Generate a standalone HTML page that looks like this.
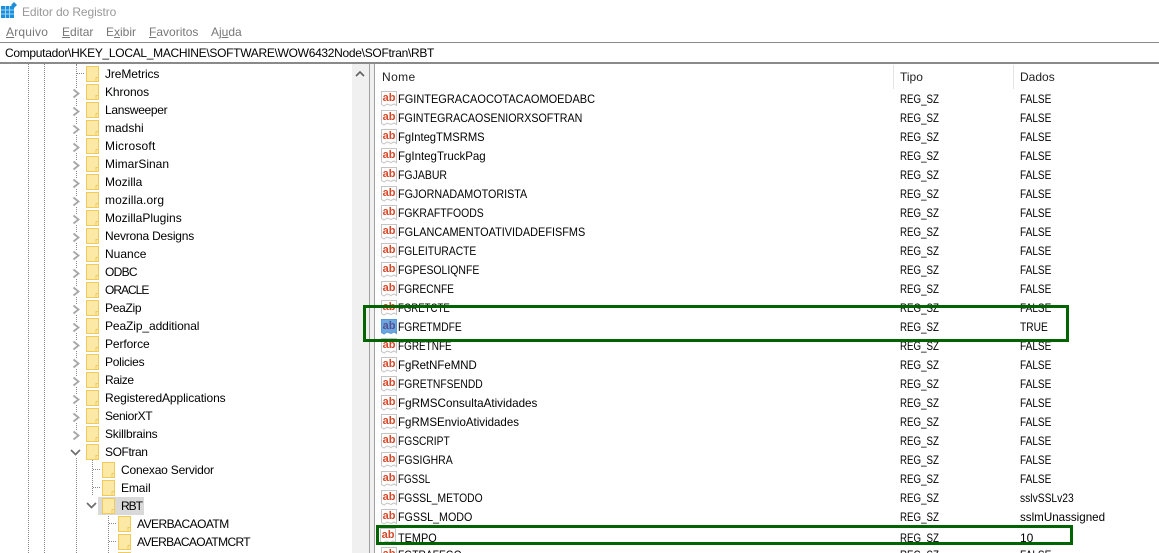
<!DOCTYPE html>
<html lang="pt"><head><meta charset="utf-8"><title>Editor do Registro</title>
<style>
html,body{margin:0;padding:0;background:#fff}
body{position:relative;width:1159px;height:553px;overflow:hidden;font:12px/18px "Liberation Sans",sans-serif;color:#000}
.a{position:absolute;white-space:nowrap}
.m{top:23px;color:#777;line-height:18px}
.m u{text-decoration:underline}
#tree{position:absolute;left:0;top:64px;width:352px;height:489px;overflow:hidden}
.t{position:relative;height:18px;line-height:18px;white-space:nowrap}
.t .f{position:absolute;top:2px;width:13px;height:16px}
.t .c{position:absolute;top:6px;width:9px;height:11px;background:#fff}
.t .l{position:absolute;top:1px;letter-spacing:-.1px}
.d0 .f{left:86px}.d0 .l{left:105px}.d0 .c{left:72px}
.d1 .f{left:102px}.d1 .l{left:121px}.d1 .c{left:88px}
.d2 .f{left:118px}.d2 .l{left:137px}
.dot{position:absolute;height:1px;border-top:1px dotted #888;top:9px}
.v{position:absolute;border-left:1px dotted #888}
#list{position:absolute;left:376px;top:89px;width:783px;height:464px;overflow:hidden}
.r{position:relative;height:19px;line-height:19px;white-space:nowrap}
.r svg{position:absolute;left:5px;top:1px;width:16px;height:17px}
.r b{font-weight:400;position:absolute;left:22px;top:1px;transform-origin:0 50%}
.r i{font-style:normal;position:absolute;left:524px;top:1px;transform:scaleX(.81);transform-origin:0 50%}
.r s{text-decoration:none;position:absolute;left:644px;top:1px;transform:scaleX(.84);transform-origin:0 50%}
.box{position:absolute;border:3px solid #006400;box-sizing:border-box}
</style></head><body>
<svg width="0" height="0" style="position:absolute">
<defs>
<symbol id="fo" viewBox="0 0 13 16"><path d="M.5.5H12.500V15.500H.5Z" fill="#fde9a6" stroke="#f0cb5c"/><path d="M10 11.500h2.500v4H10Z" fill="#fde9a6" stroke="#f0cb5c"/></symbol>
<symbol id="ch" viewBox="0 0 9 11"><path d="M1.500 1.500L6.500 5.500L1.500 9.500" fill="none" stroke="#a6a6a6" stroke-width="1.800"/></symbol>
<symbol id="cd" viewBox="0 0 11 9"><path d="M1 2L5.500 6.500L10 2" fill="none" stroke="#6e6e6e" stroke-width="1.700"/></symbol>
<symbol id="ab" viewBox="0 0 16 17"><path d="M.5 1.500H15.500V15.500L13 14 10 15.500 6 14 3 16 .5 14.500Z" fill="#fff" stroke="#c4c4c4"/><text x="8" y="11" text-anchor="middle" font-family="Liberation Sans,sans-serif" font-size="11" font-weight="700" fill="#d8492a">ab</text></symbol>
<symbol id="abs" viewBox="0 0 16 17"><path d="M.5 1.500H15.500V15.500L13 14 10 15.500 6 14 3 16 .5 14.500Z" fill="#6ca6e0" stroke="#5a97d8"/><text x="8" y="11" text-anchor="middle" font-family="Liberation Sans,sans-serif" font-size="11" font-weight="700" fill="#55508f">ab</text></symbol>
</defs>
</svg>

<!-- title bar -->
<svg class="a" style="left:1px;top:2px" width="16" height="16" viewBox="0 0 16 16">
<rect x="0" y="4" width="13" height="12" fill="#1a8fdc"/>
<path d="M4.500 4V16M8.500 4V16M0 8H13M0 12H13" stroke="#9fd4f3" stroke-width="1"/>
<path d="M13 0l3 3-3 3-3-3z" fill="#1e8fd8"/>
</svg>
<div class="a" style="left:22px;top:3px;color:#999;letter-spacing:-.1px">Editor do Registro</div>
<div class="a m" style="left:6px;letter-spacing:.2px"><u>A</u>rquivo</div>
<div class="a m" style="left:62px"><u>E</u>ditar</div>
<div class="a m" style="left:106px">E<u>x</u>ibir</div>
<div class="a m" style="left:149px"><u>F</u>avoritos</div>
<div class="a m" style="left:211px">Aj<u>u</u>da</div>

<!-- address -->
<div class="a" style="left:0;top:42px;width:1159px;height:1px;background:#8a8a8a"></div>
<div class="a" style="left:5px;top:44px;letter-spacing:-.3px">Computador\HKEY_LOCAL_MACHINE\SOFTWARE\WOW6432Node\SOFtran\RBT</div>
<div class="a" style="left:0;top:62px;width:1159px;height:2px;background:#8a8a8a"></div>

<!-- tree guides -->
<div class="v" style="left:28px;top:64px;height:489px"></div>
<div class="v" style="left:44px;top:64px;height:489px"></div>
<div class="v" style="left:76px;top:64px;height:372px"></div>
<div class="v" style="left:76px;top:458px;height:95px"></div>
<div class="v" style="left:92px;top:460px;height:35px"></div>
<div class="v" style="left:108px;top:514px;height:39px"></div>

<div id="tree">
<div class="t d0"><span class="dot" style="left:77px;width:7px"></span><svg class="f"><use href="#fo"/></svg><span class="l">JreMetrics</span></div>
<div class="t d0"><svg class="c"><use href="#ch"/></svg><svg class="f"><use href="#fo"/></svg><span class="l">Khronos</span></div>
<div class="t d0"><svg class="c"><use href="#ch"/></svg><svg class="f"><use href="#fo"/></svg><span class="l" style="letter-spacing:-.3px">Lansweeper</span></div>
<div class="t d0"><svg class="c"><use href="#ch"/></svg><svg class="f"><use href="#fo"/></svg><span class="l" style="letter-spacing:0">madshi</span></div>
<div class="t d0"><svg class="c"><use href="#ch"/></svg><svg class="f"><use href="#fo"/></svg><span class="l" style="letter-spacing:.2px">Microsoft</span></div>
<div class="t d0"><svg class="c"><use href="#ch"/></svg><svg class="f"><use href="#fo"/></svg><span class="l" style="letter-spacing:0">MimarSinan</span></div>
<div class="t d0"><svg class="c"><use href="#ch"/></svg><svg class="f"><use href="#fo"/></svg><span class="l" style="letter-spacing:0">Mozilla</span></div>
<div class="t d0"><svg class="c"><use href="#ch"/></svg><svg class="f"><use href="#fo"/></svg><span class="l" style="letter-spacing:.1px">mozilla.org</span></div>
<div class="t d0"><svg class="c"><use href="#ch"/></svg><svg class="f"><use href="#fo"/></svg><span class="l" style="letter-spacing:0">MozillaPlugins</span></div>
<div class="t d0"><svg class="c"><use href="#ch"/></svg><svg class="f"><use href="#fo"/></svg><span class="l" style="letter-spacing:-.2px">Nevrona Designs</span></div>
<div class="t d0"><svg class="c"><use href="#ch"/></svg><svg class="f"><use href="#fo"/></svg><span class="l" style="letter-spacing:0">Nuance</span></div>
<div class="t d0"><svg class="c"><use href="#ch"/></svg><svg class="f"><use href="#fo"/></svg><span class="l" style="letter-spacing:-.7px">ODBC</span></div>
<div class="t d0"><svg class="c"><use href="#ch"/></svg><svg class="f"><use href="#fo"/></svg><span class="l" style="letter-spacing:-1px">ORACLE</span></div>
<div class="t d0"><svg class="c"><use href="#ch"/></svg><svg class="f"><use href="#fo"/></svg><span class="l" style="letter-spacing:-.3px">PeaZip</span></div>
<div class="t d0"><svg class="c"><use href="#ch"/></svg><svg class="f"><use href="#fo"/></svg><span class="l">PeaZip_additional</span></div>
<div class="t d0"><svg class="c"><use href="#ch"/></svg><svg class="f"><use href="#fo"/></svg><span class="l">Perforce</span></div>
<div class="t d0"><svg class="c"><use href="#ch"/></svg><svg class="f"><use href="#fo"/></svg><span class="l" style="letter-spacing:-.25px">Policies</span></div>
<div class="t d0"><svg class="c"><use href="#ch"/></svg><svg class="f"><use href="#fo"/></svg><span class="l" style="letter-spacing:-.4px">Raize</span></div>
<div class="t d0"><svg class="c"><use href="#ch"/></svg><svg class="f"><use href="#fo"/></svg><span class="l">RegisteredApplications</span></div>
<div class="t d0"><svg class="c"><use href="#ch"/></svg><svg class="f"><use href="#fo"/></svg><span class="l" style="letter-spacing:-.35px">SeniorXT</span></div>
<div class="t d0"><svg class="c"><use href="#ch"/></svg><svg class="f"><use href="#fo"/></svg><span class="l" style="letter-spacing:-.2px">Skillbrains</span></div>
<div class="t d0"><svg class="c" style="left:70px;top:6px;width:11px;height:9px"><use href="#cd"/></svg><svg class="f"><use href="#fo"/></svg><span class="l" style="letter-spacing:-.4px">SOFtran</span></div>
<div class="t d1"><span class="dot" style="left:93px;width:7px"></span><svg class="f"><use href="#fo"/></svg><span class="l" style="letter-spacing:-.2px">Conexao Servidor</span></div>
<div class="t d1"><span class="dot" style="left:93px;width:7px"></span><svg class="f"><use href="#fo"/></svg><span class="l">Email</span></div>
<div class="t d1"><span style="position:absolute;left:98px;top:1px;width:46px;height:18px;background:#d9d9d9"></span><svg class="c" style="left:86px;top:5px;width:11px;height:9px;background:none"><use href="#cd"/></svg><svg class="f"><use href="#fo"/></svg><span class="l" style="letter-spacing:-1px">RBT</span></div>
<div class="t d2"><span class="dot" style="left:109px;width:7px"></span><svg class="f"><use href="#fo"/></svg><span class="l" style="letter-spacing:-.55px">AVERBACAOATM</span></div>
<div class="t d2"><span class="dot" style="left:109px;width:7px"></span><svg class="f"><use href="#fo"/></svg><span class="l" style="letter-spacing:-.65px">AVERBACAOATMCRT</span></div>
<div class="t d2"><svg class="f"><use href="#fo"/></svg></div>
</div>

<!-- tree scrollbar + splitter -->
<div class="a" style="left:352px;top:64px;width:17px;height:489px;background:#f0f0f0"></div>
<svg class="a" style="left:355px;top:70px" width="10" height="8" viewBox="0 0 10 8"><path d="M1 6L5 2L9 6" fill="none" stroke="#606060" stroke-width="1.600"/></svg>
<div class="a" style="left:369px;top:64px;width:1px;height:489px;background:#a0a0a0"></div>
<div class="a" style="left:370px;top:64px;width:4px;height:489px;background:#f0f0f0"></div>
<div class="a" style="left:374px;top:64px;width:1px;height:489px;background:#a0a0a0"></div>

<!-- header -->
<div class="a" style="left:382px;top:68px;color:#222;letter-spacing:.4px">Nome</div>
<div class="a" style="left:900px;top:68px;color:#222">Tipo</div>
<div class="a" style="left:1020px;top:68px;color:#222">Dados</div>
<div class="a" style="left:893px;top:65px;width:1px;height:24px;background:#e3e3e3"></div>
<div class="a" style="left:1013px;top:65px;width:1px;height:24px;background:#e3e3e3"></div>

<div id="list">
<div class="r"><svg><use href="#ab"/></svg><b style="transform:scaleX(.916)">FGINTEGRACAOCOTACAOMOEDABC</b><i>REG_SZ</i><s>FALSE</s></div>
<div class="r"><svg><use href="#ab"/></svg><b style="transform:scaleX(.889)">FGINTEGRACAOSENIORXSOFTRAN</b><i>REG_SZ</i><s>FALSE</s></div>
<div class="r"><svg><use href="#ab"/></svg><b style="transform:scaleX(.935)">FgIntegTMSRMS</b><i>REG_SZ</i><s>FALSE</s></div>
<div class="r"><svg><use href="#ab"/></svg><b style="transform:scaleX(.957)">FgIntegTruckPag</b><i>REG_SZ</i><s>FALSE</s></div>
<div class="r"><svg><use href="#ab"/></svg><b style="transform:scaleX(.875)">FGJABUR</b><i>REG_SZ</i><s>FALSE</s></div>
<div class="r"><svg><use href="#ab"/></svg><b style="transform:scaleX(.896)">FGJORNADAMOTORISTA</b><i>REG_SZ</i><s>FALSE</s></div>
<div class="r"><svg><use href="#ab"/></svg><b style="transform:scaleX(.869)">FGKRAFTFOODS</b><i>REG_SZ</i><s>FALSE</s></div>
<div class="r"><svg><use href="#ab"/></svg><b style="transform:scaleX(.908)">FGLANCAMENTOATIVIDADEFISFMS</b><i>REG_SZ</i><s>FALSE</s></div>
<div class="r"><svg><use href="#ab"/></svg><b style="transform:scaleX(.857)">FGLEITURACTE</b><i>REG_SZ</i><s>FALSE</s></div>
<div class="r"><svg><use href="#ab"/></svg><b style="transform:scaleX(.871)">FGPESOLIQNFE</b><i>REG_SZ</i><s>FALSE</s></div>
<div class="r"><svg><use href="#ab"/></svg><b style="transform:scaleX(.848)">FGRECNFE</b><i>REG_SZ</i><s>FALSE</s></div>
<div class="r"><svg><use href="#ab"/></svg><b style="transform:scaleX(.8)">FGRETCTE</b><i>REG_SZ</i><s>FALSE</s></div>
<div class="r"><svg><use href="#abs"/></svg><b style="transform:scaleX(.853)">FGRETMDFE</b><i>REG_SZ</i><s style="transform:scaleX(.85)">TRUE</s></div>
<div class="r"><svg><use href="#ab"/></svg><b style="transform:scaleX(.83)">FGRETNFE</b><i>REG_SZ</i><s>FALSE</s></div>
<div class="r"><svg><use href="#ab"/></svg><b style="transform:scaleX(.952)">FgRetNFeMND</b><i>REG_SZ</i><s>FALSE</s></div>
<div class="r"><svg><use href="#ab"/></svg><b style="transform:scaleX(.859)">FGRETNFSENDD</b><i>REG_SZ</i><s>FALSE</s></div>
<div class="r"><svg><use href="#ab"/></svg><b style="transform:scaleX(.972)">FgRMSConsultaAtividades</b><i>REG_SZ</i><s>FALSE</s></div>
<div class="r"><svg><use href="#ab"/></svg><b style="transform:scaleX(.96)">FgRMSEnvioAtividades</b><i>REG_SZ</i><s>FALSE</s></div>
<div class="r"><svg><use href="#ab"/></svg><b style="transform:scaleX(.852)">FGSCRIPT</b><i>REG_SZ</i><s>FALSE</s></div>
<div class="r"><svg><use href="#ab"/></svg><b style="transform:scaleX(.873)">FGSIGHRA</b><i>REG_SZ</i><s>FALSE</s></div>
<div class="r"><svg><use href="#ab"/></svg><b style="transform:scaleX(.82)">FGSSL</b><i>REG_SZ</i><s>FALSE</s></div>
<div class="r"><svg><use href="#ab"/></svg><b style="transform:scaleX(.859)">FGSSL_METODO</b><i>REG_SZ</i><s style="transform:scaleX(.857)">sslvSSLv23</s></div>
<div class="r"><svg><use href="#ab"/></svg><b style="transform:scaleX(.892)">FGSSL_MODO</b><i>REG_SZ</i><s style="transform:scaleX(.966)">sslmUnassigned</s></div>
<div class="r" style="top:2px"><svg style="left:4px;top:-1px"><use href="#ab"/></svg><b style="transform:scaleX(.907)">TEMPO</b><i>REG_SZ</i><s style="transform:none">10</s></div>
<div class="r" style="top:0"><svg><use href="#ab"/></svg><b style="transform:scaleX(.853)">FGTRAFEGO</b><i>REG_SZ</i><s>FALSE</s></div>
</div>

<div class="box" style="left:363px;top:305px;width:706px;height:37px"></div>
<div class="box" style="left:376px;top:525px;width:697px;height:20px"></div>
</body></html>
